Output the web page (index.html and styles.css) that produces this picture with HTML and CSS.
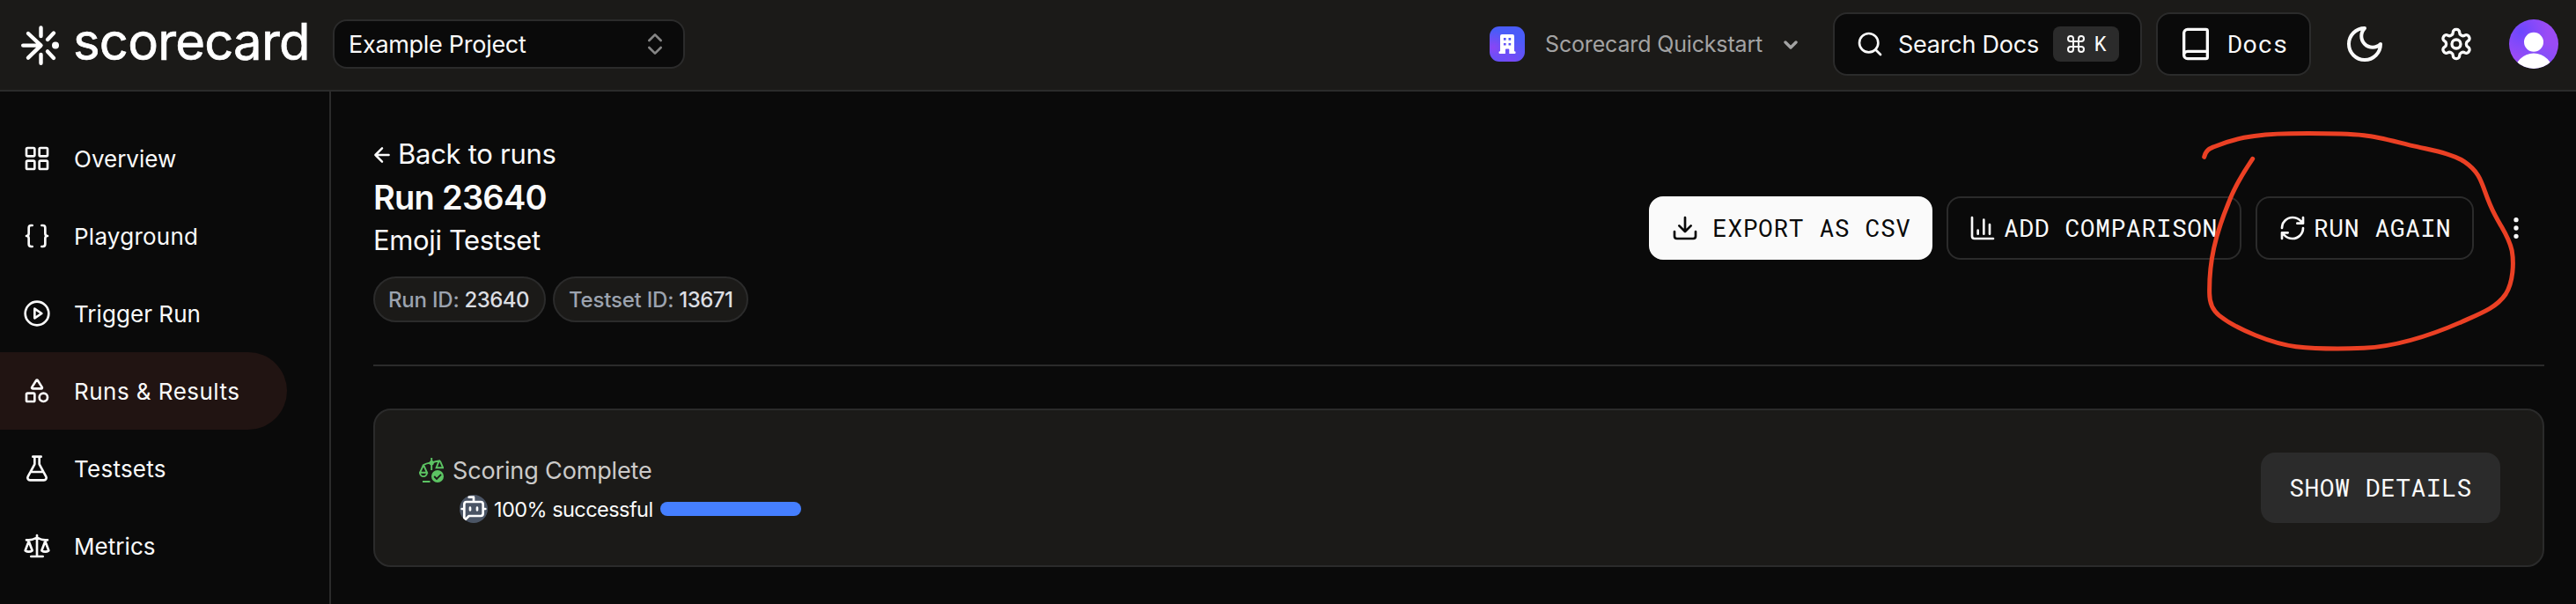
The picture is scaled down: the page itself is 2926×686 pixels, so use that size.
FILE: index.html
```html
<!DOCTYPE html>
<html lang="en">
<head>
<meta charset="utf-8">
<title>Scorecard – Run 23640</title>
<link rel="stylesheet" href="styles.css">
</head>
<body>
<header class="topbar">
  <a class="logo">
    <svg class="logo-mark" viewBox="24 29 43 45" fill="none" stroke="#fff" stroke-width="4.4" stroke-linecap="round" stroke-linejoin="round">
      <path d="M46.5 31.4V41M46.5 62v9.8M54 45l7-7.5M54 58.4l7 7.5M26.2 51.6H46M32 38l14.5 13.6L32 65.6"/>
      <circle cx="63" cy="51.6" r="4" fill="#fff" stroke="none"/>
    </svg>
    <span class="logo-text">scorecard</span>
  </a>
  <div class="select">
    <span class="select-text">Example Project</span>
    <svg class="icon select-arrows" viewBox="0 0 24 24"><path d="m7 15 5 5 5-5M7 9l5-5 5 5"/></svg>
  </div>
  <div class="spacer"></div>
  <div class="org">
    <span class="org-logo">
      <svg viewBox="0 0 40 40"><path fill="#fff" fill-rule="evenodd" d="M12 11a2 2 0 0 1 2-2h12a2 2 0 0 1 2 2v17.3h.4a1.2 1.2 0 0 1 1.200 1.200v.3a1.200 1.200 0 0 1-1.200 1.200H22.300V26.500a1 1 0 0 0-1-1h-2.400a1 1 0 0 0-1 1V31h-6.200a1.200 1.200 0 0 1-1.200-1.200v-.3a1.200 1.200 0 0 1 1.200-1.200h.3zM15.900 13.100v2.700h2.700v-2.700zM21.500 13.100v2.700h2.700v-2.700zM15.900 18.900v2.700h2.700v-2.700zM21.500 18.900v2.700h2.700v-2.700z"/></svg>
    </span>
    <span class="org-name">Scorecard Quickstart</span>
    <svg class="org-chevron" viewBox="0 0 16 10"><path d="M2 2l6 6 6-6"/></svg>
  </div>
  <div class="search">
    <svg class="icon" viewBox="0 0 24 24"><circle cx="11" cy="11" r="8"/><path d="m21 21-4.300-4.300"/></svg>
    <span class="search-text">Search Docs</span>
    <kbd class="kbd"><svg class="icon cmd" viewBox="0 0 24 24"><path d="M15 6v12a3 3 0 1 0 3-3H6a3 3 0 1 0 3 3V6a3 3 0 1 0-3 3h12a3 3 0 1 0-3-3"/></svg><span>K</span></kbd>
  </div>
  <div class="docs">
    <svg class="icon icon-40" viewBox="0 0 24 24"><path d="M4 19.500v-15A2.500 2.500 0 0 1 6.500 2H19a1 1 0 0 1 1 1v18a1 1 0 0 1-1 1H6.500a1 1 0 0 1 0-5H20"/></svg>
    <span class="docs-text">Docs</span>
  </div>
  <svg class="icon moon" viewBox="0 0 24 24"><path d="M12 3a6 6 0 0 0 9 9 9 9 0 1 1-9-9Z"/></svg>
  <svg class="icon icon-40 gear" viewBox="0 0 24 24"><path d="M12.220 2h-.44a2 2 0 0 0-2 2v.18a2 2 0 0 1-1 1.730l-.43.25a2 2 0 0 1-2 0l-.15-.08a2 2 0 0 0-2.730.73l-.22.38a2 2 0 0 0 .73 2.730l.15.1a2 2 0 0 1 1 1.720v.51a2 2 0 0 1-1 1.740l-.15.09a2 2 0 0 0-.73 2.730l.22.38a2 2 0 0 0 2.730.73l.15-.08a2 2 0 0 1 2 0l.43.25a2 2 0 0 1 1 1.730V20a2 2 0 0 0 2 2h.44a2 2 0 0 0 2-2v-.18a2 2 0 0 1 1-1.730l.43-.25a2 2 0 0 1 2 0l.15.08a2 2 0 0 0 2.730-.73l.22-.39a2 2 0 0 0-.73-2.730l-.15-.08a2 2 0 0 1-1-1.740v-.5a2 2 0 0 1 1-1.740l.15-.09a2 2 0 0 0 .73-2.730l-.22-.38a2 2 0 0 0-2.730-.73l-.15.08a2 2 0 0 1-2 0l-.43-.25a2 2 0 0 1-1-1.730V4a2 2 0 0 0-2-2z"/><circle cx="12" cy="12" r="3"/></svg>
  <span class="avatar">
    <svg viewBox="0 0 56 56" fill="#fff"><ellipse cx="28" cy="25.700" rx="11" ry="11"/><circle cx="28" cy="60.500" r="22"/></svg>
  </span>
</header>

<div class="body">
  <nav class="sidebar">
    <a class="nav-item"><svg class="icon" viewBox="0 0 24 24"><rect x="3" y="3" width="7" height="7" rx="1"/><rect x="14" y="3" width="7" height="7" rx="1"/><rect x="14" y="14" width="7" height="7" rx="1"/><rect x="3" y="14" width="7" height="7" rx="1"/></svg><span class="n-overview">Overview</span></a>
    <a class="nav-item"><svg class="icon" viewBox="0 0 24 24"><path d="M8 3H7a2 2 0 0 0-2 2v5a2 2 0 0 1-2 2 2 2 0 0 1 2 2v5a2 2 0 0 0 2 2h1M16 21h1a2 2 0 0 0 2-2v-5a2 2 0 0 1 2-2 2 2 0 0 1-2-2V5a2 2 0 0 0-2-2h-1"/></svg><span class="n-playground">Playground</span></a>
    <a class="nav-item"><svg class="icon" viewBox="0 0 24 24"><circle cx="12" cy="12" r="10"/><path d="m10 8 6 4-6 4Z"/></svg><span class="n-trigger">Trigger Run</span></a>
    <a class="nav-item active"><svg class="icon" viewBox="0 0 24 24"><path d="M8.300 10a.7.7 0 0 1-.626-1.079L11.400 3a.7.7 0 0 1 1.198-.043L16.300 8.900a.7.7 0 0 1-.572 1.100Z"/><rect x="3" y="14" width="7" height="7" rx="1"/><circle cx="17.500" cy="17.500" r="3.500"/></svg><span class="n-runs">Runs &amp; Results</span></a>
    <a class="nav-item"><svg class="icon" viewBox="0 0 24 24"><path d="M14 2v6a2 2 0 0 0 .245.960l5.510 10.080A2 2 0 0 1 18 22H6a2 2 0 0 1-1.755-2.960l5.510-10.080A2 2 0 0 0 10 8V2M6.453 15h11.094M8.500 2h7"/></svg><span class="n-testsets">Testsets</span></a>
    <a class="nav-item"><svg class="icon" viewBox="0 0 24 24"><path d="m16 16 3-8 3 8c-.87.65-1.920 1-3 1s-2.130-.35-3-1ZM2 16l3-8 3 8c-.87.65-1.920 1-3 1s-2.130-.35-3-1ZM7 21h10M12 3v18M3 7h2c2 0 5-1 7-2 2 1 5 2 7 2h2"/></svg><span class="n-metrics">Metrics</span></a>
  </nav>

  <main class="main">
    <section class="run-header">
      <div class="run-info">
        <a class="back"><svg class="icon back-arrow" viewBox="0 0 24 24"><path d="m12 19-7-7 7-7M19 12H5"/></svg><span>Back to runs</span></a>
        <h1 class="run-title">Run 23640</h1>
        <div class="run-testset">Emoji Testset</div>
        <div class="badges">
          <span class="badge badge-run"><span class="badge-label">Run ID:</span><span class="badge-value">23640</span></span>
          <span class="badge badge-testset"><span class="badge-label">Testset ID:</span><span class="badge-value">13671</span></span>
        </div>
      </div>
      <div class="actions">
        <button class="btn btn-export"><svg class="icon" viewBox="0 0 24 24"><path d="M21 15v4a2 2 0 0 1-2 2H5a2 2 0 0 1-2-2v-4M7 10l5 5 5-5M12 15V3"/></svg><span>EXPORT AS CSV</span></button>
        <button class="btn btn-compare"><svg class="icon" viewBox="0 0 24 24"><path d="M3 3v16a2 2 0 0 0 2 2h16M18 17V9M13 17V5M8 17v-3"/></svg><span>ADD COMPARISON</span></button>
        <button class="btn btn-again"><svg class="icon" viewBox="0 0 24 24"><path d="M3 12a9 9 0 0 1 9-9 9.750 9.750 0 0 1 6.740 2.740L21 8M21 3v5h-5M21 12a9 9 0 0 1-9 9 9.750 9.750 0 0 1-6.740-2.740L3 16M8 16H3v5"/></svg><span>RUN AGAIN</span></button>
        <button class="more"><svg class="icon" viewBox="0 0 24 24"><circle cx="12" cy="12" r="1"/><circle cx="12" cy="5" r="1"/><circle cx="12" cy="19" r="1"/></svg></button>
      </div>
    </section>

    <section class="card">
      <div class="status">
        <div class="status-title">
          <svg class="score-icon" viewBox="0 0 28 28" fill="none" stroke="#5cc463" stroke-width="1.900">
            <path d="M14.200 0v14M4 8.700Q8 5.800 14.200 5.600Q18 4 24 3.200M4.800 8.500L1 16.800h8L5.300 8.500M1 16.800a4 4.300 0 0 0 8 0ZM22.600 3.600l-3 7.700h7.600L23.900 3.600M4 27h8.500"/>
            <circle cx="14.200" cy="5.700" r="1.700" fill="#5cc463"/>
            <circle cx="21" cy="21" r="7" fill="#5cc463" stroke="none"/>
            <path d="m17.200 21 2.800 2.800 5-5" stroke="#1b1a18"/>
          </svg>
          <span>Scoring Complete</span>
        </div>
        <div class="status-row">
          <span class="bot"><svg class="icon" viewBox="0 0 24 24"><path d="M12 6V2H8M8 18l-4 4V8a2 2 0 0 1 2-2h12a2 2 0 0 1 2 2v8a2 2 0 0 1-2 2ZM2 12h2M9 11v2M15 11v2M20 12h2"/></svg></span>
          <span class="status-text">100% successful</span>
          <span class="progress"></span>
        </div>
      </div>
      <button class="details"><span>SHOW DETAILS</span></button>
    </section>
  </main>
</div>

<svg class="annotation" viewBox="0 0 1568 870" preserveAspectRatio="none">
  <path d="M309 145C315 121 326 117 342 110C400 86 470 66 600 65C690 64 790 65 850 71C910 77 970 97 1030 110C1090 124 1150 134 1190 161C1260 209 1246 253 1294 343C1320 394 1340 415 1351 464C1358 505 1356 570 1330 612C1300 657 1250 676 1180 707C1080 751 970 790 850 796C770 799 690 799 620 791C540 781 420 733 360 685C335 665 327 640 327 610C325 500 347 410 392 300C411 249 440 200 473 151"/>
</svg>
</body>
</html>
```
FILE: styles.css
```css
* { box-sizing: border-box; }

body {
  margin: 0;
  width: 2926px;
  height: 686px;
  overflow: hidden;
  background: #0a0a0a;
  color: #fafafa;
  font-family: Inter, "Liberation Sans", sans-serif;
  font-size: 26px;
  display: flex;
  flex-direction: column;
}

button { font: inherit; letter-spacing: inherit; margin: 0; padding: 0; border: 0; background: none; color: inherit; }
span { white-space: nowrap; }

.icon {
  width: 32px;
  height: 32px;
  flex: none;
  fill: none;
  stroke: currentColor;
  stroke-width: 2;
  stroke-linecap: round;
  stroke-linejoin: round;
}
.icon-40 { width: 40px; height: 40px; }

/* Top bar */
.topbar {
  height: 104px;
  flex: none;
  display: flex;
  align-items: center;
  padding: 0 20px 2px 24px;
  background: #1b1a18;
  border-bottom: 2px solid #2b2b2b;
}
.logo { display: flex; width: 354px; align-items: center; gap: 16px; }
.logo-mark { width: 43px; height: 45px; margin-top: 3px; flex: none; }
.logo-text { font-size: 58px; line-height: 64px; letter-spacing: -0.8px; margin-top: -6px; color: #fff; -webkit-text-stroke: 0.7px #fff; }
.select {
  width: 400px;
  height: 56px;
  padding: 0 16px;
  display: flex;
  align-items: center;
  justify-content: space-between;
  background: #0a0a0a;
  border: 2px solid #2b2b2b;
  border-radius: 16px;
}
.select-text { font-size: 27px; letter-spacing: -0.29px; }
.select-arrows { color: #858585; }
.spacer { flex: 1; }
.org { display: flex; align-items: center; width: 390px; color: #a3a3a3; }
.org-logo {
  width: 40px;
  height: 40px;
  border-radius: 11px;
  overflow: hidden;
  background: radial-gradient(circle at 10% 60%, #8a45f5 0, transparent 45%), radial-gradient(circle at 60% 100%, #7a48f6 0, transparent 60%), #4a5cf8;
}
.org-logo svg { display: block; }
.org-name { font-size: 25px; letter-spacing: -0.16px; margin-left: 23px; width: 271px; margin-top: -1px; }
.org-chevron { width: 16px; height: 10px; margin-top: 1px; fill: none; stroke: #a3a3a3; stroke-width: 3.4; stroke-linecap: round; stroke-linejoin: round; }
.search, .docs {
  height: 72px;
  display: flex;
  align-items: center;
  background: #0a0a0a;
  border: 2px solid #2b2b2b;
  border-radius: 16px;
}
.search { width: 351px; padding-left: 24px; }
.search-text { font-size: 27px; letter-spacing: -0.23px; margin-left: 16px; width: 176px; margin-top: 1px; }
.kbd {
  width: 75px;
  height: 40px;
  display: flex;
  align-items: center;
  justify-content: space-between;
  padding: 0 14px 0 14px;
  font-family: "Roboto Mono", "Liberation Mono", monospace;
  font-size: 24px;
  background: #2b2b2b;
  border-radius: 8px;
}
.kbd span { position: relative; top: -1px; }
.cmd { width: 24px; height: 24px; margin-top: -1px; }
.docs { width: 176px; margin-left: 16px; padding-left: 23px; gap: 16px; }
.docs-text { font-family: "Roboto Mono", "Liberation Mono", monospace; font-size: 28px; letter-spacing: 0.4px; margin-top: -1px; }
.moon { width: 48px; height: 48px; margin-left: 37px; }
.gear { margin-left: 60px; }
.avatar {
  width: 56px;
  height: 56px;
  margin-left: 40px;
  border-radius: 50%;
  overflow: hidden;
  background: radial-gradient(circle at 25% 25%, #6c47ff 0, transparent 50%), radial-gradient(circle at 60% 90%, #7a50fb 0, transparent 45%), #9a4bf5;
}
.avatar svg { display: block; }

/* Sidebar */
.body { flex: 1; display: flex; min-height: 0; }
.sidebar { width: 376px; flex: none; padding-top: 32px; border-right: 2px solid #2b2b2b; }
.nav-item {
  width: 326px;
  height: 88px;
  padding-left: 26px;
  display: flex;
  align-items: center;
  gap: 26px;
  border-radius: 0 44px 44px 0;
}
.nav-item.active { background: #211412; }
.n-overview { letter-spacing: 0; }
.n-playground { letter-spacing: 0.25px; }
.n-trigger { letter-spacing: 0.05px; }
.n-runs { letter-spacing: 0.47px; }
.n-testsets { letter-spacing: 0.25px; }
.n-metrics { letter-spacing: 0.05px; }

/* Run header */
.main { flex: 1; padding: 47px 36px 0 48px; }
.run-header {
  height: 265px;
  padding-bottom: 47px;
  display: flex;
  justify-content: space-between;
  align-items: center;
  border-bottom: 2px solid #2b2b2b;
}
.run-info { height: 216px; }
.back { height: 48px; display: flex; align-items: center; gap: 5px; font-size: 31px; letter-spacing: -0.28px; }
.back span { margin-top: -1px; }
.back-arrow { width: 26px; height: 26px; margin-left: -3px; margin-top: 2px; stroke-width: 2.3; }
.run-title { margin: 0; font-size: 38px; line-height: 50px; font-weight: 600; letter-spacing: -0.73px; }
.run-testset { font-size: 31px; line-height: 48px; letter-spacing: -0.37px; }
.badges { display: flex; gap: 8px; margin-top: 17px; }
.badge {
  height: 52px;
  display: flex;
  align-items: center;
  padding-left: 15px;
  font-size: 24px;
  font-weight: 500;
  background: #1b1a18;
  border: 2px solid #2b2b2b;
  border-radius: 26px;
}
.badge-run { width: 196px; gap: 6px; }
.badge-testset { width: 222px; gap: 6px; padding-left: 16px; }
.badge-label { color: #9ca3af; letter-spacing: -0.2px; }
.badge-value { color: #dcdee2; letter-spacing: -0.55px; }

.actions { display: flex; gap: 16px; font-family: "Roboto Mono", "Liberation Mono", monospace; font-size: 28px; letter-spacing: 0.55px; }
.btn { height: 72px; display: flex; align-items: center; border: 2px solid #2b2b2b; border-radius: 16px; padding-left: 23px; gap: 8px; }
.btn span, .details span { position: relative; top: -1px; }
.btn-export { width: 322px; gap: 15px; color: #0a0a0a; background: #fafafa; border-color: #fafafa; }
.btn-compare { width: 335px; }
.btn-again { width: 248px; padding-left: 24px; gap: 8px; }
.more { width: 64px; height: 72px; display: flex; align-items: center; justify-content: center; }

/* Score card */
.card {
  height: 180px;
  margin-top: 48px;
  padding: 48px;
  display: flex;
  justify-content: space-between;
  background: #1b1a18;
  border: 2px solid #2b2b2b;
  border-radius: 20px;
}
.status { display: flex; flex-direction: column; gap: 8px; }
.status-title { height: 40px; display: flex; align-items: center; gap: 10px; padding-left: 2px; font-size: 27px; letter-spacing: -0.14px; color: #cbcac9; }
.score-icon { width: 28px; height: 28px; }
.status-row { height: 32px; display: flex; align-items: center; padding-left: 48px; font-size: 23.5px; letter-spacing: -0.55px; }
.bot { width: 32px; height: 32px; border-radius: 50%; overflow: hidden; background: #4b5565; color: #fff; }
.bot .icon { display: block; }
.status-text { margin-left: 7px; width: 189px; }
.progress { width: 160px; height: 16px; border-radius: 8px; background: #457fff; }
.details {
  width: 272px;
  height: 80px;
  background: #2b2b2b;
  border-radius: 16px;
  font-family: "Roboto Mono", "Liberation Mono", monospace;
  font-size: 28px;
  letter-spacing: 0.5px;
}

/* Hand-drawn circle over the run-again button */
.annotation {
  position: absolute;
  left: 2400px;
  top: 130px;
  width: 526px;
  height: 290px;
  fill: none;
  stroke: #eb4024;
  stroke-width: 15;
  stroke-linecap: round;
  pointer-events: none;
}
```
